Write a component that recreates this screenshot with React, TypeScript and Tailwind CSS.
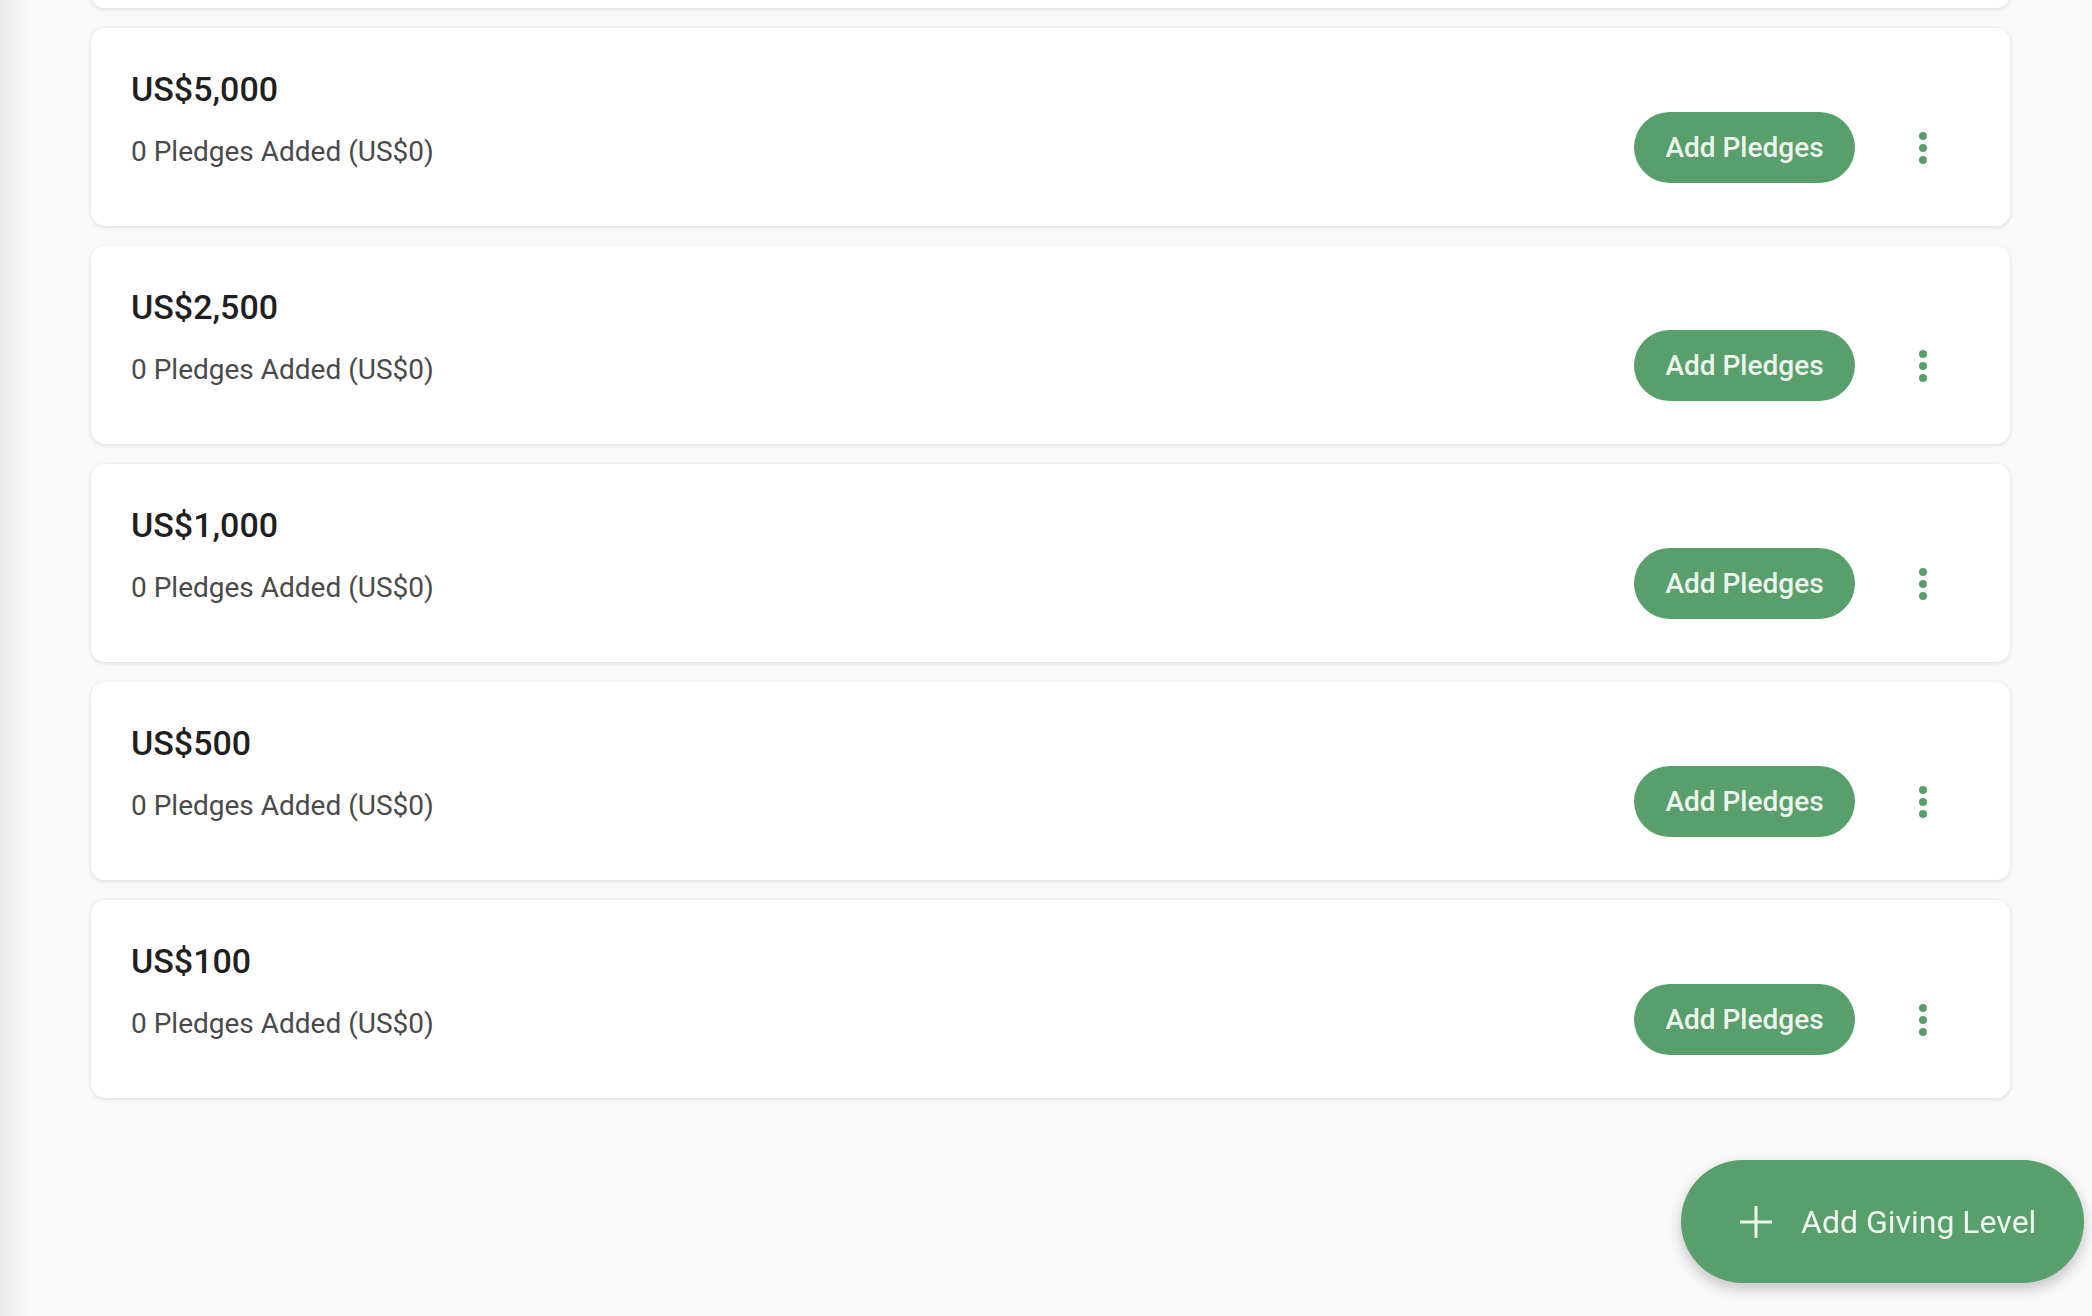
import * as React from "react";

const levels = ["US$5,000", "US$2,500", "US$1,000", "US$500", "US$100"];

const MoreVert: React.FC = () => (
  <svg width="48" height="48" viewBox="0 0 24 24" fill="#589f6c">
    <circle cx="12" cy="6" r="2" />
    <circle cx="12" cy="12" r="2" />
    <circle cx="12" cy="18" r="2" />
  </svg>
);

const cardClass = "h-[198px] bg-white rounded-[14px] shadow-[0_1px_4px_rgba(0,0,0,0.13)]";

const LevelCard: React.FC<{ amount: string }> = ({ amount }) => (
  <div className={`${cardClass} flex justify-between pl-[40px] pr-[63px]`}>
    <div className="pt-[41px]">
      <p className="text-[34px] leading-[40px] font-medium text-[#1f1f1f]">{amount}</p>
      <p className="mt-[23px] text-[28px] leading-[40px] text-[#4a4a4a]">0 Pledges Added (US$0)</p>
    </div>
    <div className="mt-[84px] h-[71px] flex items-center gap-[44px]">
      <button className="h-[71px] w-[221px] rounded-full bg-[#589f6c] text-[#eef5ef] text-[28px] font-medium">
        Add Pledges
      </button>
      <button className="w-[48px] h-[48px] flex items-center justify-center">
        <MoreVert />
      </button>
    </div>
  </div>
);

export default function App() {
  return (
    <div
      className="relative h-[1316px] overflow-hidden bg-[#f9f9f9]"
      style={{ fontFamily: "Roboto, 'Noto Sans', sans-serif" }}
    >
      <div className="flex h-full">
        <div className="w-[30px] shrink-0 bg-gradient-to-r from-[#ebebeb] to-[#f9f9f9]" />
        <div className="flex-1 pl-[61px] pr-[82px]">
          <div className="mt-[-190px] flex flex-col gap-[20px]">
            {/* previous level, scrolled out of view */}
            <div className={cardClass} />
            {levels.map((l) => (
              <LevelCard key={l} amount={l} />
            ))}
          </div>
        </div>
      </div>
      <button className="fixed right-[8px] bottom-[33px] h-[123px] w-[403px] rounded-full bg-[#589f6c] text-[#eef5ef] shadow-[0_6px_14px_rgba(0,0,0,0.22)] flex items-center pl-[58px] gap-[28px]">
        <svg width="34" height="34" viewBox="0 0 34 34" stroke="#eef5ef" strokeWidth="3">
          <line x1="17" y1="1" x2="17" y2="33" />
          <line x1="1" y1="17" x2="33" y2="17" />
        </svg>
        <span className="text-[32px]">Add Giving Level</span>
      </button>
    </div>
  );
}
